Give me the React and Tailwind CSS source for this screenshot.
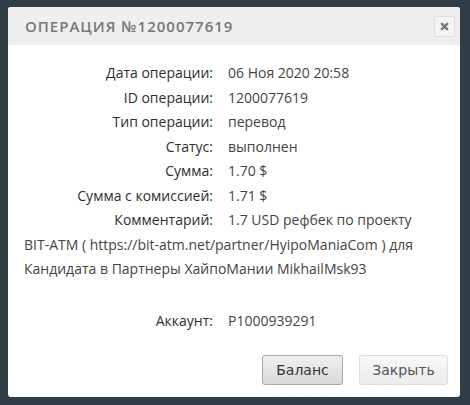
import React from "react"

const rows = [
  ["Дата операции:", "06 Ноя 2020 20:58"],
  ["ID операции:", "1200077619"],
  ["Тип операции:", "перевод"],
  ["Статус:", "выполнен"],
  ["Сумма:", "1.70 $"],
  ["Сумма с комиссией:", "1.71 $"],
]

function Label({ children }) {
  return <span className="inline-block w-[204px] pr-[15px] text-right font-medium text-[#2e2e2e]">{children}</span>
}

export default function App() {
  return (
    <div className="min-h-screen bg-[#2f3d46] pt-[7px] pl-[8px] pr-[10px] font-['Open_Sans',sans-serif]">
      <div className="w-[452px] h-[390px] bg-white rounded-[3px] overflow-hidden flex flex-col">
        <div className="h-[38px] bg-[#efefef] flex items-center justify-between pl-[17px] pr-[5px]">
          <h1 className="text-[15px] font-semibold tracking-[1px] text-[#777]">ОПЕРАЦИЯ №1200077619</h1>
          <button className="w-[21px] h-[21px] border border-[#dcdcdc] bg-[#f5f5f5] rounded-[2px] flex items-center justify-center">
            <svg width="9" height="9" viewBox="0 0 10 10">
              <path d="M2 2 L8 8 M8 2 L2 8" stroke="#777" strokeWidth="2.6" strokeLinecap="round" />
            </svg>
          </button>
        </div>
        <div className="pl-[16px] pr-[6px] pt-[16px] text-[14px] leading-[24.5px] text-[#444]">
          {rows.map(([l, v]) => (
            <div key={l}>
              <Label>{l}</Label>
              {v}
            </div>
          ))}
          <div>
            <Label>Комментарий:</Label>
            1.7 USD рефбек по проекту
            <br />
            BIT-ATM ( https://bit-atm.net/partner/HyipoManiaCom ) для
            <br />
            Кандидата в Партнеры ХайпоМании MikhailMsk93
          </div>
          <div className="mt-[27px]">
            <Label>Аккаунт:</Label>
            P1000939291
          </div>
        </div>
        <div className="mt-auto flex justify-end gap-[16px] pr-[12px] pb-[12px] font-['DejaVu_Sans',sans-serif] text-[14px]">
          <button className="w-[81px] h-[30px] rounded-[3px] border border-[#a9a9a9] bg-gradient-to-b from-[#f0f0f0] to-[#d9d9d9] text-[#333]">Баланс</button>
          <button className="w-[89px] h-[30px] rounded-[3px] border border-[#dedede] bg-gradient-to-b from-[#f8f8f8] to-[#ececec] text-[#555]">Закрыть</button>
        </div>
      </div>
    </div>
  )
}
